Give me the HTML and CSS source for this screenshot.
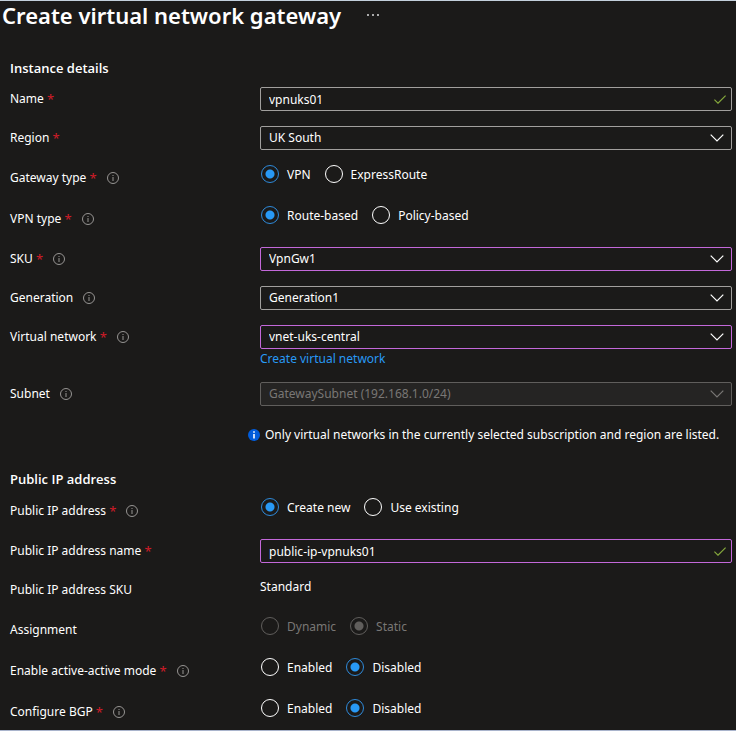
FILE: index.html
```html
<!DOCTYPE html>
<html lang="en">
<head>
<meta charset="utf-8">
<title>Create virtual network gateway</title>
<link rel="stylesheet" href="styles.css">
</head>
<body>
<svg class="defs" aria-hidden="true">
  <symbol id="info" viewBox="0 0 12 12"><circle cx="6" cy="6" r="5.5" fill="none" stroke="currentColor"/><path d="M6 5v4M6 3v1" stroke="currentColor" fill="none"/></symbol>
  <symbol id="chevron" viewBox="0 0 14 8"><path d="M.7 .7 7 7 13.300 .7" fill="none" stroke="currentColor" stroke-width="1.200"/></symbol>
  <symbol id="check" viewBox="0 0 12 9"><path d="M.4 4.600 4 8.200 11.600 .600" fill="none" stroke="currentColor" stroke-width="1.200"/></symbol>
</svg>
<main class="page">
  <header class="title-bar">
    <h1>Create virtual network gateway</h1>
    <button class="more" type="button" aria-label="More"><svg viewBox="0 0 12 2"><path d="M0 0h2v2H0zM5 0h2v2H5zM10 0h2v2h-2z" fill="currentColor"/></svg></button>
  </header>
  <form class="form">
    <h2>Instance details</h2>
    <div class="row">
      <label class="label" for="name">Name <b>*</b></label>
      <div class="field"><input id="name" type="text" value="vpnuks01"><svg class="check"><use href="#check"/></svg></div>
    </div>
    <div class="row">
      <label class="label" for="region">Region <b>*</b></label>
      <div class="field"><select id="region"><option>UK South</option></select><svg class="chevron"><use href="#chevron"/></svg></div>
    </div>
    <div class="row">
      <div class="label" id="gt">Gateway type <b>*</b><svg class="info"><use href="#info"/></svg></div>
      <div class="options" role="radiogroup" aria-labelledby="gt">
        <label><input type="radio" name="gt" checked>VPN</label>
        <label><input type="radio" name="gt">ExpressRoute</label>
      </div>
    </div>
    <div class="row">
      <div class="label" id="vt">VPN type <b>*</b><svg class="info"><use href="#info"/></svg></div>
      <div class="options" role="radiogroup" aria-labelledby="vt">
        <label><input type="radio" name="vt" checked>Route-based</label>
        <label><input type="radio" name="vt">Policy-based</label>
      </div>
    </div>
    <div class="row">
      <label class="label" for="sku">SKU <b>*</b><svg class="info"><use href="#info"/></svg></label>
      <div class="field edited"><select id="sku"><option>VpnGw1</option></select><svg class="chevron"><use href="#chevron"/></svg></div>
    </div>
    <div class="row">
      <label class="label" for="gen">Generation<svg class="info"><use href="#info"/></svg></label>
      <div class="field"><select id="gen"><option>Generation1</option></select><svg class="chevron"><use href="#chevron"/></svg></div>
    </div>
    <div class="row">
      <label class="label" for="vnet">Virtual network <b>*</b><svg class="info"><use href="#info"/></svg></label>
      <div>
        <div class="field edited"><select id="vnet"><option>vnet-uks-central</option></select><svg class="chevron"><use href="#chevron"/></svg></div>
        <a class="create" href="#">Create virtual network</a>
      </div>
    </div>
    <div class="row">
      <label class="label" for="subnet">Subnet<svg class="info"><use href="#info"/></svg></label>
      <div class="field off"><select id="subnet" disabled><option>GatewaySubnet (192.168.1.0/24)</option></select><svg class="chevron"><use href="#chevron"/></svg></div>
    </div>
    <p class="note"><svg viewBox="0 0 12 12"><circle cx="6" cy="6" r="6" fill="#015cda"/><path d="M6 5v4.500M6 2.200v1.600" stroke="#fff" stroke-width="1.600"/></svg>Only virtual networks in the currently selected subscription and region are listed.</p>
    <h2>Public IP address</h2>
    <div class="row">
      <div class="label" id="ip">Public IP address <b>*</b><svg class="info"><use href="#info"/></svg></div>
      <div class="options" role="radiogroup" aria-labelledby="ip">
        <label><input type="radio" name="ip" checked>Create new</label>
        <label><input type="radio" name="ip">Use existing</label>
      </div>
    </div>
    <div class="row">
      <label class="label" for="ipname">Public IP address name <b>*</b></label>
      <div class="field edited"><input id="ipname" type="text" value="public-ip-vpnuks01"><svg class="check"><use href="#check"/></svg></div>
    </div>
    <div class="row">
      <div class="label">Public IP address SKU</div>
      <div class="value">Standard</div>
    </div>
    <div class="row">
      <div class="label" id="as">Assignment</div>
      <div class="options" role="radiogroup" aria-labelledby="as">
        <label class="off"><input type="radio" name="as" disabled>Dynamic</label>
        <label class="off"><input type="radio" name="as" checked disabled>Static</label>
      </div>
    </div>
    <div class="row">
      <div class="label" id="aa">Enable active-active mode <b>*</b><svg class="info"><use href="#info"/></svg></div>
      <div class="options" role="radiogroup" aria-labelledby="aa">
        <label><input type="radio" name="aa">Enabled</label>
        <label><input type="radio" name="aa" checked>Disabled</label>
      </div>
    </div>
    <div class="row">
      <div class="label" id="bgp">Configure BGP <b>*</b><svg class="info"><use href="#info"/></svg></div>
      <div class="options" role="radiogroup" aria-labelledby="bgp">
        <label><input type="radio" name="bgp">Enabled</label>
        <label><input type="radio" name="bgp" checked>Disabled</label>
      </div>
    </div>
  </form>
</main>
</body>
</html>
```

FILE: styles.css
```css
* { box-sizing: border-box; }
body {
  margin: 0;
  background: #1b1a19;
  color: #fff;
  font: 12px/18px "Noto Sans", "Open Sans", sans-serif;
}
h1, h2, p { margin: 0; }
.defs { display: none; }
.page {
  min-height: 100vh;
  border-top: 1px solid #c3d0dc;
  border-bottom: 1px solid #a9b4cc;
}
.title-bar {
  display: flex;
  align-items: center;
  gap: 26px;
  height: 28px;
  padding-left: 2px;
}
h1 { font-size: 22px; line-height: 28px; font-weight: 600; }
.more {
  display: flex;
  padding: 0;
  border: 0;
  background: none;
  color: #aaa;
}
.more svg { width: 12px; height: 2px; }
.form { padding: 30px 4px 4px 10px; }
h2 {
  margin-bottom: 10px;
  font: 600 13px/18px "Open Sans", "Noto Sans", sans-serif;
}
.row {
  display: grid;
  grid-template-columns: 250px 1fr;
  margin-bottom: 15px;
}
.row:last-child { margin-bottom: 0; }
.label { display: flex; align-items: center; height: 24px; white-space: pre; }
.label:has(+ .options) { height: 26px; }
.label b { color: #d01c28; font-size: 13px; font-weight: 400; }
.info { width: 12px; height: 12px; margin-left: 10px; color: #979593; }
.field { position: relative; color: #fff; }
.field input, .field select {
  display: block;
  width: 100%;
  height: 24px;
  margin: 0;
  padding: 0 8px;
  border: 1px solid #a19f9d;
  border-radius: 2px;
  outline: 0;
  appearance: none;
  background: #1b1a19;
  color: #fff;
  font: inherit;
}
.field.edited input, .field.edited select { border-color: #c368d9; }
.field.off { color: #797775; }
.field.off select {
  border-color: #605e5c;
  background: #252423;
  color: #797775;
  opacity: 1;
}
.chevron, .check { position: absolute; pointer-events: none; }
.chevron { top: 8px; right: 8px; width: 14px; height: 8px; }
.check { top: 8px; right: 6px; width: 12px; height: 9px; color: #85a83c; }
.create {
  display: block;
  padding-top: 1px;
  line-height: 17px;
  color: #2899f5;
  text-decoration: none;
}
.options { display: flex; gap: 14px; height: 26px; padding-left: 1px; }
.options label { display: flex; align-items: flex-start; gap: 8px; line-height: 20px; }
.options input {
  flex: none;
  width: 18px;
  height: 18px;
  margin: 0;
  border: 1px solid #fff;
  border-radius: 50%;
  appearance: none;
}
.options input:checked {
  border-color: #2e8ada;
  background: radial-gradient(circle, #2899f5 0 4px, transparent 5px);
}
.options .off { color: #797775; }
.options .off input { border-color: #605e5c; }
.options .off input:checked { background: radial-gradient(circle, #605e5c 0 4px, transparent 5px); }
.note {
  display: flex;
  align-items: center;
  gap: 5px;
  height: 28px;
  margin-bottom: 21px;
  padding-left: 238px;
}
.note svg { flex: none; width: 12px; height: 12px; }
```
